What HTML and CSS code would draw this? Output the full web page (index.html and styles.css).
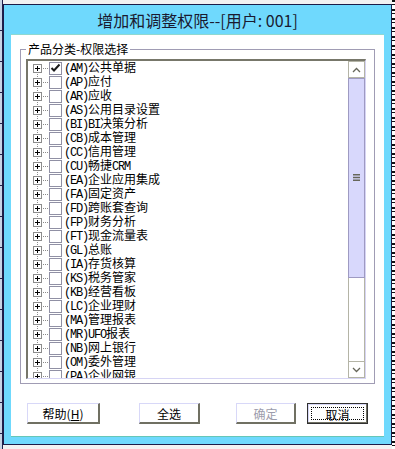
FILE: index.html
```html
<!DOCTYPE html>
<html lang="zh-CN">
<head>
    <meta charset="UTF-8">
    <title>增加和调整权限</title>
    <link rel="stylesheet" href="styles.css">
</head>
<body>
    <div class="desk">
        <div class="edge edge-left"></div>

        <div class="dialog">
            <div class="title">增加和调整权限--[用户: 001]</div>

            <div class="panel">
                <fieldset class="group">
                    <legend>产品分类-权限选择</legend>

                    <div class="tree">
                        <ul class="items">
                            <li class="item"><span class="expander"></span><span class="branch"></span><span class="check checked"><svg width="11" height="11" viewBox="0 0 11 11"><polyline points="1.5,5 4,7.5 9.5,1.5" fill="none" stroke="#1a1a1a" stroke-width="2"/></svg></span><span class="label"><span class="code">(AM)</span>公共单据</span></li>
                            <li class="item"><span class="expander"></span><span class="branch"></span><span class="check"></span><span class="label"><span class="code">(AP)</span>应付</span></li>
                            <li class="item"><span class="expander"></span><span class="branch"></span><span class="check"></span><span class="label"><span class="code">(AR)</span>应收</span></li>
                            <li class="item"><span class="expander"></span><span class="branch"></span><span class="check"></span><span class="label"><span class="code">(AS)</span>公用目录设置</span></li>
                            <li class="item"><span class="expander"></span><span class="branch"></span><span class="check"></span><span class="label"><span class="code">(BI)BI</span>决策分析</span></li>
                            <li class="item"><span class="expander"></span><span class="branch"></span><span class="check"></span><span class="label"><span class="code">(CB)</span>成本管理</span></li>
                            <li class="item"><span class="expander"></span><span class="branch"></span><span class="check"></span><span class="label"><span class="code">(CC)</span>信用管理</span></li>
                            <li class="item"><span class="expander"></span><span class="branch"></span><span class="check"></span><span class="label"><span class="code">(CU)</span>畅捷<span class="code">CRM</span></span></li>
                            <li class="item"><span class="expander"></span><span class="branch"></span><span class="check"></span><span class="label"><span class="code">(EA)</span>企业应用集成</span></li>
                            <li class="item"><span class="expander"></span><span class="branch"></span><span class="check"></span><span class="label"><span class="code">(FA)</span>固定资产</span></li>
                            <li class="item"><span class="expander"></span><span class="branch"></span><span class="check"></span><span class="label"><span class="code">(FD)</span>跨账套查询</span></li>
                            <li class="item"><span class="expander"></span><span class="branch"></span><span class="check"></span><span class="label"><span class="code">(FP)</span>财务分析</span></li>
                            <li class="item"><span class="expander"></span><span class="branch"></span><span class="check"></span><span class="label"><span class="code">(FT)</span>现金流量表</span></li>
                            <li class="item"><span class="expander"></span><span class="branch"></span><span class="check"></span><span class="label"><span class="code">(GL)</span>总账</span></li>
                            <li class="item"><span class="expander"></span><span class="branch"></span><span class="check"></span><span class="label"><span class="code">(IA)</span>存货核算</span></li>
                            <li class="item"><span class="expander"></span><span class="branch"></span><span class="check"></span><span class="label"><span class="code">(KS)</span>税务管家</span></li>
                            <li class="item"><span class="expander"></span><span class="branch"></span><span class="check"></span><span class="label"><span class="code">(KB)</span>经营看板</span></li>
                            <li class="item"><span class="expander"></span><span class="branch"></span><span class="check"></span><span class="label"><span class="code">(LC)</span>企业理财</span></li>
                            <li class="item"><span class="expander"></span><span class="branch"></span><span class="check"></span><span class="label"><span class="code">(MA)</span>管理报表</span></li>
                            <li class="item"><span class="expander"></span><span class="branch"></span><span class="check"></span><span class="label"><span class="code">(MR)UFO</span>报表</span></li>
                            <li class="item"><span class="expander"></span><span class="branch"></span><span class="check"></span><span class="label"><span class="code">(NB)</span>网上银行</span></li>
                            <li class="item"><span class="expander"></span><span class="branch"></span><span class="check"></span><span class="label"><span class="code">(OM)</span>委外管理</span></li>
                            <li class="item"><span class="expander"></span><span class="branch"></span><span class="check"></span><span class="label"><span class="code">(PA)</span>企业网银</span></li>
                        </ul>

                        <div class="scrollbar">
                            <div class="sb-btn">
                                <svg width="9" height="6" viewBox="0 0 9 6"><polyline points="1,5 4.5,1.5 8,5" fill="none" stroke="#66665a" stroke-width="1.3"/></svg>
                            </div>
                            <div class="sb-thumb">
                                <svg width="7" height="7" viewBox="0 0 7 7"><rect x="0" y="0" width="7" height="1.5" fill="#66665a"/><rect x="0" y="2.75" width="7" height="1.5" fill="#66665a"/><rect x="0" y="5.5" width="7" height="1.5" fill="#66665a"/></svg>
                            </div>
                            <div class="sb-track"></div>
                            <div class="sb-btn">
                                <svg width="9" height="6" viewBox="0 0 9 6"><polyline points="1,1 4.5,4.5 8,1" fill="none" stroke="#66665a" stroke-width="1.3"/></svg>
                            </div>
                        </div>
                    </div>
                </fieldset>

                <div class="buttons">
                    <button class="btn btn-help">帮助(<u>H</u>)</button>
                    <button class="btn btn-all">全选</button>
                    <button class="btn btn-ok" disabled>确定</button>
                    <button class="btn btn-cancel"><span class="focus">取消</span></button>
                </div>
            </div>
        </div>

        <div class="edge edge-right"></div>
    </div>
</body>
</html>
```

FILE: styles.css
```css
/* Base */
* {
    margin: 0;
    padding: 0;
    box-sizing: border-box;
}

body {
    font-family: "Noto Sans CJK SC", "Liberation Sans", sans-serif;
    font-size: 12px;
    color: #000;
    background-color: #f2f2f2;
}

/* Desktop behind the dialog */
.desk {
    display: flex;
    height: 449px;
    overflow: hidden;
}

.edge {
    width: 3px;
    flex-shrink: 0;
}

.edge-left {
    background:
        repeating-linear-gradient(to bottom, transparent 0 30px, #20204a 30px 31px),
        linear-gradient(to right, #c8d4e4 0 2px, #20204a 2px 3px);
}

.edge-right {
    background:
        repeating-linear-gradient(to bottom, #111 0 2px, #fff 2px 4px, #111 4px 5px, #fff 5px 9px),
        #fff;
}

/* Dialog window */
.dialog {
    width: 389px;
    height: 441px;
    margin-top: 4px;
    border: 1px solid #1c1c48;
    background-color: #6fd9fd;
    display: flex;
    flex-direction: column;
    flex-shrink: 0;
}

.title {
    height: 29px;
    line-height: 30px;
    text-align: center;
    font-size: 16px;
    color: #1a1a30;
}

.panel {
    height: 403px;
    margin: 0 7px;
    background-color: #fff;
    border-top: 1px solid #8fd8d0;
    border-bottom: 1px solid #66c6b8;
    padding-top: 7px;
}

/* Group box */
.group {
    margin: 0 9px;
    height: 342px;
    border: 1px solid #a09cb4;
    padding: 3px 8px 4px 5px;
}

.group legend {
    height: 14px;
    line-height: 14px;
    padding: 0 2px;
    font-size: 12px;
}

/* Tree view */
.tree {
    height: 320px;
    display: flex;
    border-top: 2px solid #77776a;
    border-left: 2px solid #77776a;
    border-bottom: 1px solid #d6d4f4;
    border-right: 1px solid #d6d4f4;
    overflow: hidden;
}

.items {
    flex: 1;
    list-style: none;
    padding-left: 5px;
    background: repeating-linear-gradient(to bottom, #8a8a8a 0 1px, transparent 1px 2px) 9px 7px / 1px 100% no-repeat;
}

.item {
    height: 14px;
    display: flex;
    align-items: center;
    white-space: nowrap;
}

.expander {
    width: 9px;
    height: 9px;
    border: 1px solid #8c8c8c;
    background:
        linear-gradient(#000, #000) center / 5px 1px no-repeat,
        linear-gradient(#000, #000) center / 1px 5px no-repeat,
        #fff;
    flex-shrink: 0;
}

.branch {
    width: 7px;
    height: 1px;
    background: repeating-linear-gradient(to right, transparent 0 1px, #8a8a8a 1px 2px);
    flex-shrink: 0;
}

.check {
    width: 13px;
    height: 13px;
    border: 1px solid #9090a4;
    background-color: #fff;
    display: flex;
    align-items: center;
    justify-content: center;
    flex-shrink: 0;
}

.label {
    margin-left: 2px;
    line-height: 14px;
}

.code {
    font-family: "Liberation Mono", monospace;
    letter-spacing: -1.2px;
}

/* Scrollbar */
.scrollbar {
    width: 17px;
    display: flex;
    flex-direction: column;
    flex-shrink: 0;
}

.sb-btn {
    height: 17px;
    border: 1px solid #b4b4a6;
    background-color: #fff;
    display: flex;
    align-items: center;
    justify-content: center;
}

.sb-thumb {
    height: 200px;
    border: 1px solid #9e9ac2;
    background-color: #d8d8fc;
    display: flex;
    align-items: flex-end;
    justify-content: center;
    padding-bottom: 96px;
}

.sb-track {
    flex: 1;
    border-left: 1px solid #b4b4a6;
    border-right: 1px solid #b4b4a6;
    background-color: #fff;
}

/* Buttons */
.buttons {
    display: flex;
    margin-top: 19px;
    padding-left: 16px;
}

.btn {
    height: 21px;
    font-family: "Noto Sans CJK SC", sans-serif;
    font-size: 12px;
    color: #000;
    background-color: #fff;
    border-top: 1px solid #d8d8f8;
    border-left: 1px solid #d8d8f8;
    border-bottom: 2px solid #707062;
    border-right: 2px solid #707062;
}

.btn-help {
    width: 73px;
}

.btn-all {
    width: 61px;
    margin-left: 39px;
}

.btn-ok {
    width: 60px;
    margin-left: 36px;
    color: #9c9cac;
}

.btn-cancel {
    width: 61px;
    margin-left: 11px;
    border: 1px solid #303030;
    box-shadow: inset -1px -1px 0 #707062, inset 1px 1px 0 #d8d8f8;
    padding: 3px;
}

.btn-cancel .focus {
    display: block;
    height: 100%;
    line-height: 13px;
    border: 1px dotted #000;
}
```
